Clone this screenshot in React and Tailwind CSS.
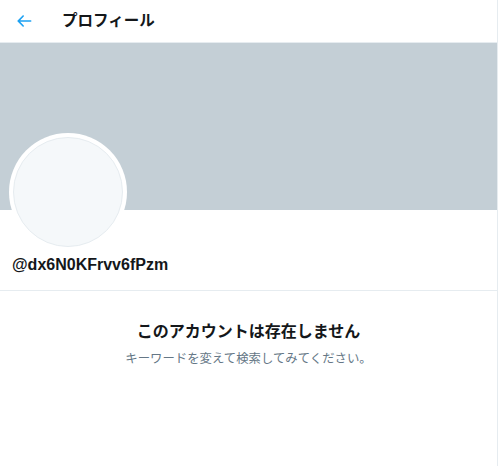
const FONT = { fontFamily: '"Liberation Sans", "Noto Sans CJK JP", sans-serif' };

function BackArrow() {
  return (
    <svg viewBox="0 0 24 24" className="w-5 h-5 fill-[#1da1f2]">
      <path d="M20 11H7.414l4.293-4.293c.39-.39.39-1.023 0-1.414s-1.023-.39-1.414 0l-6 6c-.39.39-.39 1.023 0 1.414l6 6c.195.195.45.293.707.293s.512-.098.707-.293c.39-.39.39-1.023 0-1.414L7.414 13H20c.553 0 1-.447 1-1s-.447-1-1-1z" />
    </svg>
  );
}

export default function App() {
  return (
    <div className="w-[500px] h-[466px] bg-white overflow-hidden" style={FONT}>
      <div className="w-[498px] h-full border-r border-[#e6ecf0] flex flex-col">
        {/* Header */}
        <div className="h-[43px] flex items-center px-[14px] border-b border-[#e6ecf0]">
          <BackArrow />
          <h1 className="ml-[28px] text-[15.5px] font-bold text-[#14171a]">プロフィール</h1>
        </div>

        {/* Banner */}
        <div className="h-[167px] bg-[#c4cfd6]" />

        {/* Profile */}
        <div className="px-[9px] pb-[15px] border-b border-[#e6ecf0]">
          <div className="-mt-[77px] w-[118px] h-[118px] rounded-full bg-white p-[4px]">
            <div className="w-full h-full rounded-full bg-[#f5f8fa] border border-[#e6ecf0]" />
          </div>
          <div className="mt-[4px] pl-[3px] text-[16px] font-bold text-[#14171a] leading-[20px]">
            @dx6N0KFrvv6fPzm
          </div>
        </div>

        {/* Empty state */}
        <div className="flex flex-col items-center pt-[30px]">
          <div className="text-[16px] font-bold text-[#14171a] leading-[22px]">このアカウントは存在しません</div>
          <div className="mt-[8px] text-[12.4px] text-[#657786] leading-[16px]">キーワードを変えて検索してみてください。</div>
        </div>
      </div>
    </div>
  );
}
